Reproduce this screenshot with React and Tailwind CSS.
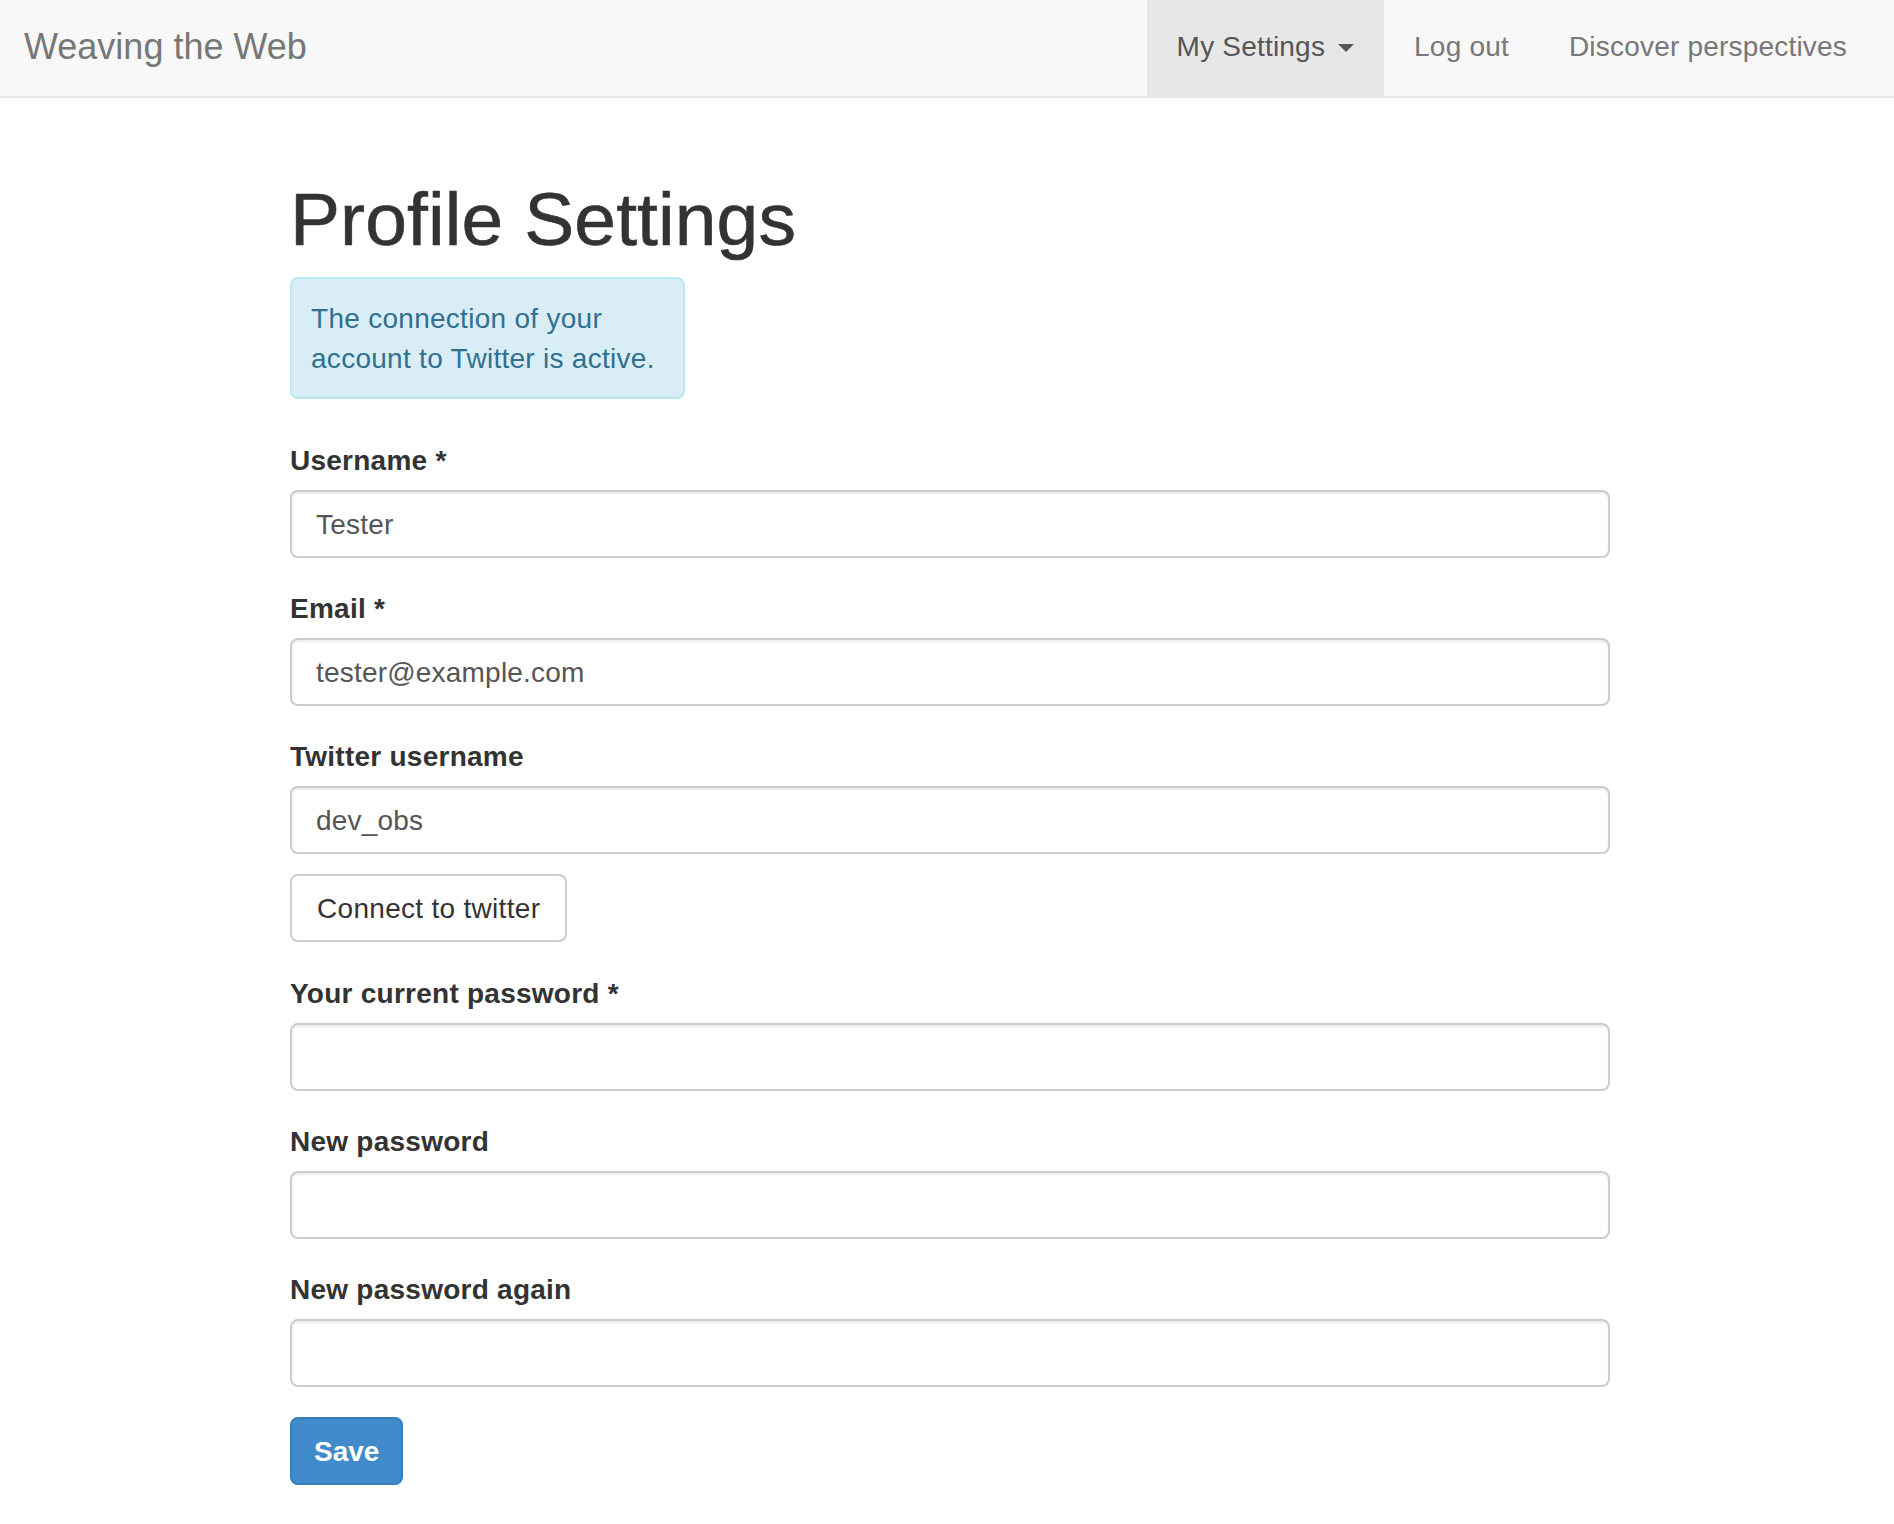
export default function App() {
  const font = { fontFamily: '"Liberation Sans", Arial, Helvetica, sans-serif' };
  const inputCls =
    "block w-full h-[68px] border-2 border-[#ccc] rounded-[8px] px-[24px] pt-[2px] text-[28px] tracking-[0.2px] text-[#555] bg-white shadow-[inset_0_2px_2px_rgba(0,0,0,0.075)] outline-none";
  const labelCls = "block text-[28px] leading-[40px] pt-[1px] font-bold tracking-[0.25px] text-[#333] mb-[9px]";
  const Field = ({ label, value, type = "text" }) => (
    <div className="mb-[30px]">
      <label className={labelCls}>{label}</label>
      <input type={type} defaultValue={value} className={inputCls} />
    </div>
  );
  return (
    <div className="min-h-[1524px] bg-white" style={font}>
      <nav className="h-[98px] bg-[#f8f8f8] border-b-2 border-[#e7e7e7] flex items-stretch justify-between pl-[24px] pr-[17px]">
        <div className="flex items-center text-[36px] text-[#777] pb-[2px]">Weaving the Web</div>
        <ul className="flex items-stretch text-[28px] tracking-[0.2px]">
          <li className="flex items-center bg-[#e7e7e7] text-[#555] px-[30px] pb-[2px]">
            <span>My Settings</span>
            <span className="inline-block ml-[13px] mt-[2px] w-0 h-0 border-t-[8px] border-t-[#555] border-x-[8px] border-x-transparent"></span>
          </li>
          <li className="flex items-center text-[#777] px-[30px] pb-[2px]">Log out</li>
          <li className="flex items-center text-[#777] pl-[30px] pr-[30px] pb-[2px]">Discover perspectives</li>
        </ul>
      </nav>
      <main className="ml-[290px] w-[1320px]">
        <h1 className="mt-[80px] mb-[17px] text-[75px] leading-[82px] text-[#333] font-normal tracking-[0.1px] [-webkit-text-stroke:0.6px_#333]">Profile Settings</h1>
        <div className="w-[395px] bg-[#d9edf7] border-2 border-[#bce8f1] rounded-[8px] text-[#31708f] text-[28px] leading-[40px] tracking-[0.28px] pl-[19px] pr-[15px] pt-[20px] pb-[18px] mb-[41px]">
          The connection of your account to Twitter is active.
        </div>
        <form onSubmit={(e) => e.preventDefault()}>
          <Field label="Username *" value="Tester" />
          <Field label="Email *" value="tester@example.com" />
          <div className="mb-[31px]">
            <label className={labelCls}>Twitter username</label>
            <input type="text" defaultValue="dev_obs" className={inputCls} />
            <button type="button" className="mt-[20px] h-[68px] px-[25px] pt-[2px] border-2 border-[#ccc] rounded-[8px] bg-white text-[28px] tracking-[0.3px] text-[#333]">
              Connect to twitter
            </button>
          </div>
          <Field label="Your current password *" value="" type="password" />
          <Field label="New password" value="" type="password" />
          <Field label="New password again" value="" type="password" />
          <button type="submit" className="h-[68px] px-[22px] pt-[2px] border-2 border-[#357ebd] rounded-[8px] bg-[#428bca] text-white text-[28px] font-bold">
            Save
          </button>
        </form>
      </main>
    </div>
  );
}
